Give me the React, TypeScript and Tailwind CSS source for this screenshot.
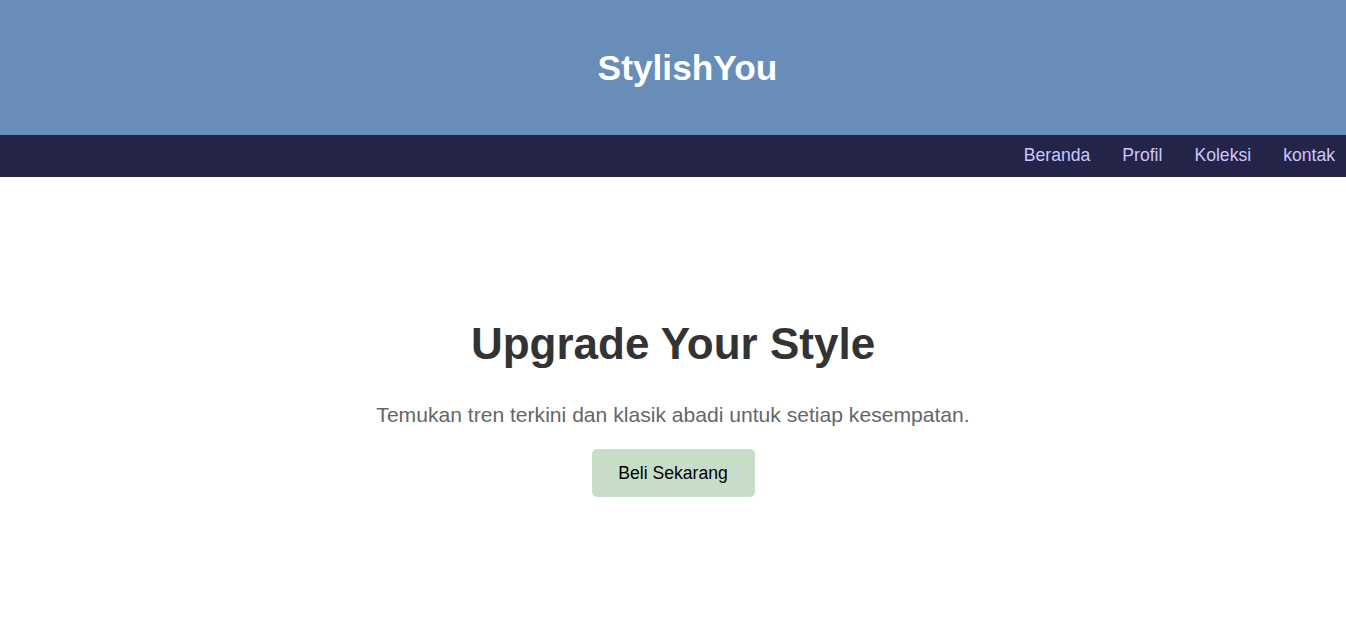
export default function App() {
  return (
    <div className="min-h-screen bg-white font-['Liberation_Sans',Arial,sans-serif]">
      <header className="h-[135px] bg-[#688db8] flex items-center justify-center pl-[29px]">
        <h1 className="text-white font-bold text-[35.3px] leading-none">StylishYou</h1>
      </header>
      <nav className="h-[42px] bg-[#232447] flex items-center justify-end gap-8 pr-[11px]">
        {["Beranda", "Profil", "Koleksi", "kontak"].map((l) => (
          <a key={l} href="#" className="text-[#cdc6ff] text-[17.6px] leading-none">
            {l}
          </a>
        ))}
      </nav>
      <main className="flex flex-col items-center pt-[142px]">
        <h2 className="text-[#333333] font-bold text-[44px] leading-[50px]">Upgrade Your Style</h2>
        <p className="mt-[34px] text-[#666666] text-[21.1px] leading-[24px]">
          Temukan tren terkini dan klasik abadi untuk setiap kesempatan.
        </p>
        <button className="mt-[22px] h-[48px] w-[163px] rounded-[5px] bg-[#c8ddc8] text-black text-[17.6px]">
          Beli Sekarang
        </button>
      </main>
    </div>
  );
}
